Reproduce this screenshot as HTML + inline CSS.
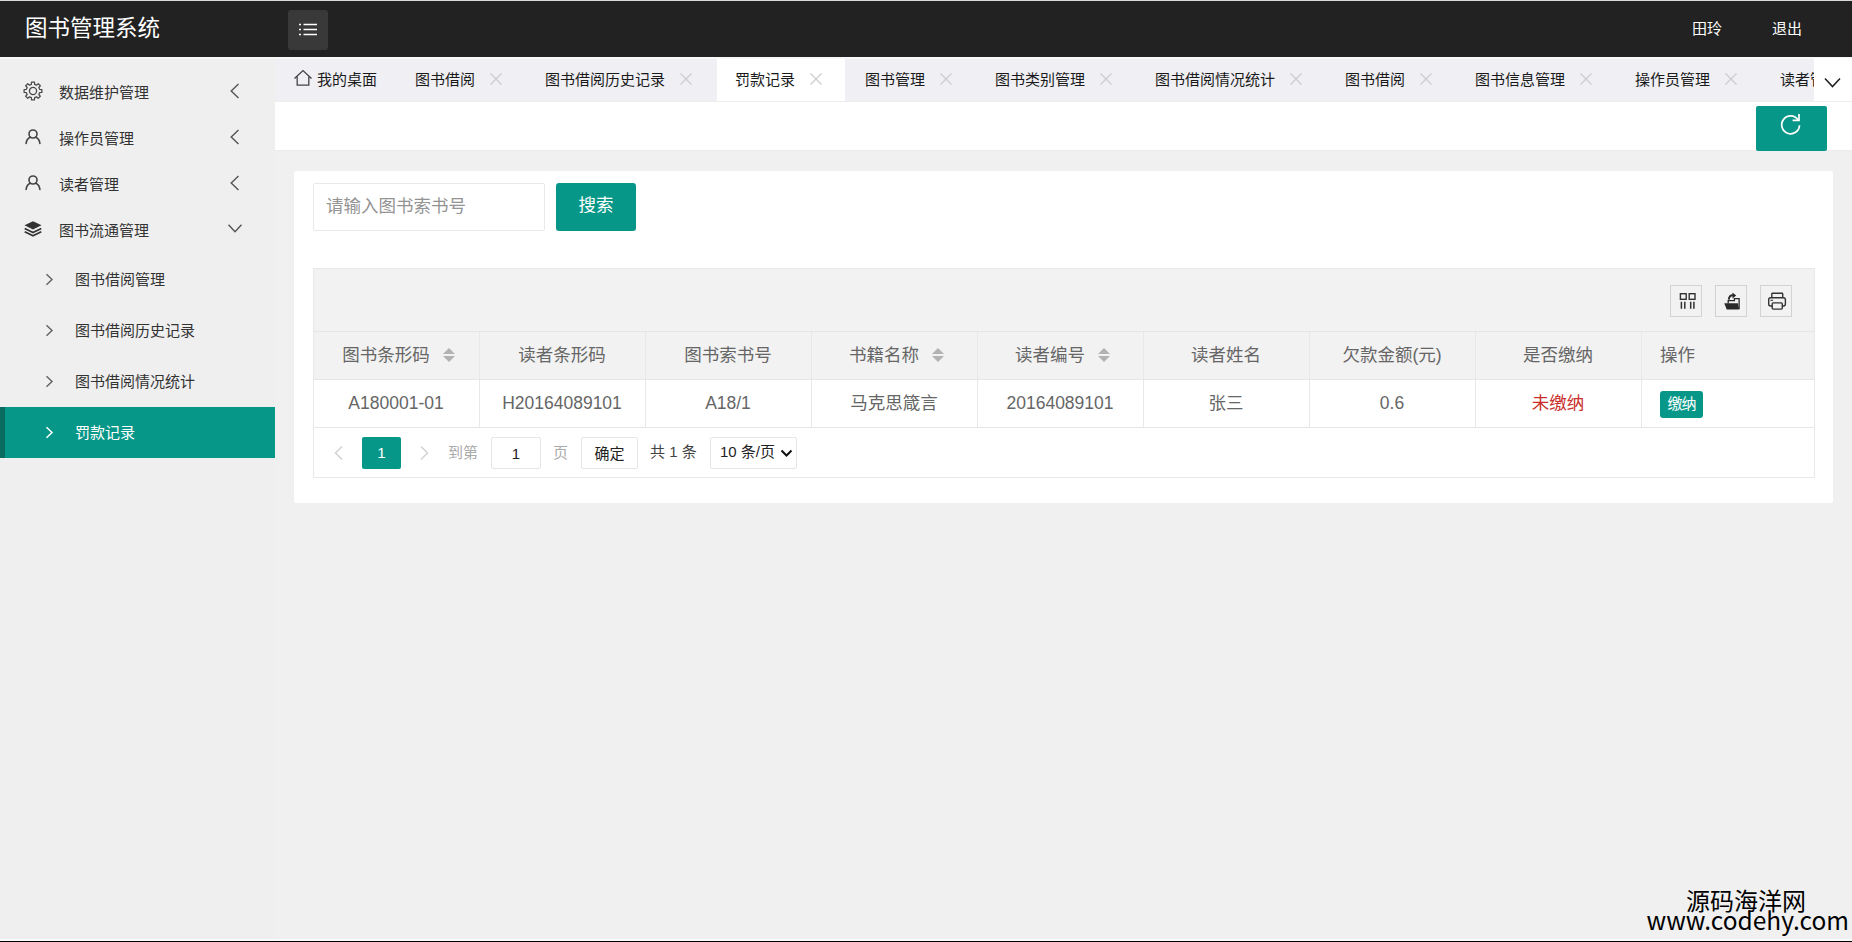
<!DOCTYPE html>
<html lang="zh-CN">
<head>
<meta charset="utf-8">
<title>图书管理系统</title>
<style>
*{box-sizing:border-box;margin:0;padding:0}
html,body{width:1852px;height:942px;overflow:hidden}
body{position:relative;background:#f0f0f0;font-family:"Liberation Sans","Noto Sans CJK SC",sans-serif;color:#333;font-size:15px}
.abs{position:absolute}
svg{display:block}
/* header */
#hdr{position:absolute;left:0;top:0;width:1852px;height:57px;background:#222222;border-top:1px solid #d8d8d8}
#logo{position:absolute;left:25px;top:0;height:56px;line-height:55px;font-size:22.5px;color:#fff;white-space:nowrap}
#ham{position:absolute;left:288px;top:9px;width:40px;height:40px;background:#393939;border-radius:3px}
.hu{position:absolute;top:0;height:56px;line-height:55px;color:#fff;font-size:15px;white-space:nowrap}
/* sidebar */
#side{position:absolute;left:0;top:57px;width:275px;height:885px;background:#efefef}
.mi{position:absolute;left:0;width:275px;height:46px;line-height:46px;font-size:15px;color:#333;white-space:nowrap}
.mi .t{position:absolute;left:59px;top:1px}
.mi svg{position:absolute}
.si{position:absolute;left:0;width:275px;height:51px;line-height:51px;font-size:15px;color:#333;white-space:nowrap}
.si .t{position:absolute;left:75px;top:0}
.si svg{position:absolute;left:45px;top:19px}
.si.on{background:#079788;color:#fff;border-left:5px solid #0a6b60}
.si.on .t{left:70px}
.si.on svg{left:40px}
/* tabs */
#tabs{position:absolute;left:275px;top:57px;width:1577px;height:44px;background:#efeff4;overflow:hidden}
.tab{position:absolute;top:0;height:44px;line-height:45px;font-size:15px;color:#1a1a1a;white-space:nowrap}
.tab .x{position:absolute;top:15px}
.tab.on{background:#fff;top:2px;height:42px;line-height:41px}
.tab.on .x{top:13px}
#more{position:absolute;left:1814px;top:58px;width:38px;height:43px;background:#fff}
#bar{position:absolute;left:275px;top:101px;width:1577px;height:50px;background:#fff;border-bottom:1px solid #ececec;border-top:1px solid #ededed}
#ref{position:absolute;left:1756px;top:106px;width:71px;height:45px;background:#079788;border-radius:2px}
/* card */
#card{position:absolute;left:294px;top:171px;width:1539px;height:332px;background:#fff;border-radius:2px}
#inp{position:absolute;left:313px;top:183px;width:232px;height:48px;border:1px solid #e9e9e9;border-radius:2px;background:#fff;color:#939393;font-size:17.5px;line-height:45px;padding-left:12px;white-space:nowrap}
#sbtn{position:absolute;left:556px;top:183px;width:80px;height:48px;background:#079788;border-radius:3px;color:#fff;font-size:17.5px;line-height:45px;text-align:center}
#tbl{position:absolute;left:313px;top:268px;width:1502px;height:210px;border:1px solid #e8e8e8;background:#fff}
#tool{position:absolute;left:0;top:0;width:1500px;height:63px;background:#f2f2f2;border-bottom:1px solid #e6e6e6}
.tb{position:absolute;top:16px;width:32px;height:32px;border:1px solid #d2d2d2}
#thead{position:absolute;left:0;top:63px;width:1500px;height:48px;background:#f2f2f2;border-bottom:1px solid #e6e6e6}
#trow{position:absolute;left:0;top:111px;width:1500px;height:48px;background:#fff;border-bottom:1px solid #e6e6e6}
.c{position:absolute;top:0;height:47px;line-height:46px;width:166px;text-align:center;font-size:17.5px;color:#666;border-right:1px solid #e8e8e8;white-space:nowrap}
.c.l{text-align:left;padding-left:18px;border-right:0;width:172px}
.sort{display:inline-block;position:relative;width:12px;height:16px;margin-left:13px;vertical-align:-2px}
.c.s{padding-left:5px}
.sort:before,.sort:after{content:"";position:absolute;left:0;border:6px solid transparent}
.sort:before{top:-5px;border-bottom-color:#b2b2b2}
.sort:after{top:9px;border-top-color:#b2b2b2}
#pay{position:absolute;left:1660px;top:391px;width:43px;height:27px;background:#079788;border-radius:3px;color:#fff;font-size:15px;line-height:26px;text-align:center;white-space:nowrap;letter-spacing:-1px}
/* pager */
.pg{position:absolute;top:437px;height:32px;line-height:31px;font-size:15px;white-space:nowrap}
.bx{border:1px solid #e6e6e6;border-radius:2px;background:#fff;text-align:center}
#wm{position:absolute;right:3px;top:889.5px;text-align:right;color:#000;font-size:24px;line-height:24px;white-space:nowrap}
#bot{position:absolute;left:0;top:939px;width:1852px;height:3px;background:#000;border-top:2px solid #fafafa}
</style>
</head>
<body>
<div id="hdr">
  <div id="logo">图书管理系统</div>
  <div id="ham"><svg width="40" height="40" viewBox="0 0 40 40"><g stroke="#fff" stroke-width="1.6" fill="none"><path d="M15.5 14.5H29M15.5 19.5H29M15.5 24.5H29"/><path d="M11 14.5h2M11 19.5h2M11 24.5h2"/></g></svg></div>
  <div class="hu" style="left:1692px">田玲</div>
  <div class="hu" style="left:1772px">退出</div>
</div>

<div id="side">
<div class="mi" style="top:12px"><svg style="left:23px;top:12px" width="20" height="20" viewBox="0 0 20 20"><g fill="none" stroke="#4a4a4a" stroke-width="1.250" stroke-linejoin="round"><circle cx="10" cy="10" r="3.600"/><path d="M8.36 3.40 L8.52 1.12 L11.48 1.12 L11.64 3.40 L13.51 4.17 L15.23 2.68 L17.32 4.77 L15.83 6.49 L16.60 8.36 L18.88 8.52 L18.88 11.48 L16.60 11.64 L15.83 13.51 L17.32 15.23 L15.23 17.32 L13.51 15.83 L11.64 16.60 L11.48 18.88 L8.52 18.88 L8.36 16.60 L6.49 15.83 L4.77 17.32 L2.68 15.23 L4.17 13.51 L3.40 11.64 L1.12 11.48 L1.12 8.52 L3.40 8.36 L4.17 6.49 L2.68 4.77 L4.77 2.68 L6.49 4.17Z"/></g></svg><span class="t">数据维护管理</span><svg style="left:228.500px;top:14px" width="12" height="16" viewBox="0 0 12 16"><path d="M9.500 1L2.200 8l7.300 7" fill="none" stroke="#555" stroke-width="1.400"/></svg></div>
<div class="mi" style="top:58px"><svg style="left:24px;top:13.4px" width="18" height="18" viewBox="0 0 18 18"><g fill="none" stroke="#444" stroke-width="1.600" stroke-linecap="round"><circle cx="9" cy="6" r="4"/><path d="M2.100 15.500c.3-3.200 2-5.400 4.300-6.300M15.900 15.500c-.3-3.200-2-5.400-4.300-6.300"/></g></svg><span class="t">操作员管理</span><svg style="left:228.500px;top:14px" width="12" height="16" viewBox="0 0 12 16"><path d="M9.500 1L2.200 8l7.300 7" fill="none" stroke="#555" stroke-width="1.400"/></svg></div>
<div class="mi" style="top:104px"><svg style="left:24px;top:13.4px" width="18" height="18" viewBox="0 0 18 18"><g fill="none" stroke="#444" stroke-width="1.600" stroke-linecap="round"><circle cx="9" cy="6" r="4"/><path d="M2.100 15.500c.3-3.200 2-5.400 4.300-6.300M15.900 15.500c-.3-3.200-2-5.400-4.300-6.300"/></g></svg><span class="t">读者管理</span><svg style="left:228.500px;top:14px" width="12" height="16" viewBox="0 0 12 16"><path d="M9.500 1L2.200 8l7.300 7" fill="none" stroke="#555" stroke-width="1.400"/></svg></div>
<div class="mi" style="top:150px"><svg style="left:23px;top:12px" width="20" height="20" viewBox="0 0 20 20"><path d="M10 2.200L1.500 6.300 10 10.400l8.500-4.100z" fill="#333"/><path d="M1.700 9.600L10 13.600l8.300-4M1.700 12.800L10 16.800l8.300-4" fill="none" stroke="#333" stroke-width="1.7" stroke-linejoin="round"/></svg><span class="t">图书流通管理</span><svg style="left:227px;top:16px" width="16" height="12" viewBox="0 0 16 12"><path d="M1.500 1.800l6.500 7 6.500-7" fill="none" stroke="#555" stroke-width="1.400"/></svg></div>
<div class="si" style="top:197px"><svg width="9" height="13" viewBox="0 0 9 13"><path d="M1.500 1.200L7 6.500l-5.500 5.300" fill="none" stroke="#666" stroke-width="1.500"/></svg><span class="t">图书借阅管理</span></div>
<div class="si" style="top:248px"><svg width="9" height="13" viewBox="0 0 9 13"><path d="M1.500 1.200L7 6.500l-5.500 5.300" fill="none" stroke="#666" stroke-width="1.500"/></svg><span class="t">图书借阅历史记录</span></div>
<div class="si" style="top:299px"><svg width="9" height="13" viewBox="0 0 9 13"><path d="M1.500 1.200L7 6.500l-5.500 5.300" fill="none" stroke="#666" stroke-width="1.500"/></svg><span class="t">图书借阅情况统计</span></div>
<div class="si on" style="top:350px"><svg width="9" height="13" viewBox="0 0 9 13"><path d="M1.500 1.200L7 6.500l-5.500 5.300" fill="none" stroke="#fff" stroke-width="1.500"/></svg><span class="t">罚款记录</span></div>
</div>
<div id="tabs">
<div class="tab" style="left:1px;width:121px"><svg style="position:absolute;left:17px;top:11px" width="20" height="20" viewBox="0 0 20 20"><path d="M1.500 10.500L10 2.600l8.500 7.900M4.200 8.800V17.200h11.600V8.800" fill="none" stroke="#444" stroke-width="1.300"/></svg><span style="position:absolute;left:41px">我的桌面</span></div>
<div class="tab" style="left:122px;width:128px"><span style="position:absolute;left:18px">图书借阅</span><svg class="x" style="left:92px" width="14" height="14" viewBox="0 0 14 14"><path d="M1.500 1.500l11 11M12.500 1.500l-11 11" stroke="#cdcdcd" stroke-width="1.300" fill="none"/></svg></div>
<div class="tab" style="left:252px;width:188px"><span style="position:absolute;left:18px">图书借阅历史记录</span><svg class="x" style="left:152px" width="14" height="14" viewBox="0 0 14 14"><path d="M1.500 1.500l11 11M12.500 1.500l-11 11" stroke="#cdcdcd" stroke-width="1.300" fill="none"/></svg></div>
<div class="tab on" style="left:442px;width:128px"><span style="position:absolute;left:18px">罚款记录</span><svg class="x" style="left:92px" width="14" height="14" viewBox="0 0 14 14"><path d="M1.500 1.500l11 11M12.500 1.500l-11 11" stroke="#cdcdcd" stroke-width="1.300" fill="none"/></svg></div>
<div class="tab" style="left:572px;width:128px"><span style="position:absolute;left:18px">图书管理</span><svg class="x" style="left:92px" width="14" height="14" viewBox="0 0 14 14"><path d="M1.500 1.500l11 11M12.500 1.500l-11 11" stroke="#cdcdcd" stroke-width="1.300" fill="none"/></svg></div>
<div class="tab" style="left:702px;width:158px"><span style="position:absolute;left:18px">图书类别管理</span><svg class="x" style="left:122px" width="14" height="14" viewBox="0 0 14 14"><path d="M1.500 1.500l11 11M12.500 1.500l-11 11" stroke="#cdcdcd" stroke-width="1.300" fill="none"/></svg></div>
<div class="tab" style="left:862px;width:188px"><span style="position:absolute;left:18px">图书借阅情况统计</span><svg class="x" style="left:152px" width="14" height="14" viewBox="0 0 14 14"><path d="M1.500 1.500l11 11M12.500 1.500l-11 11" stroke="#cdcdcd" stroke-width="1.300" fill="none"/></svg></div>
<div class="tab" style="left:1052px;width:128px"><span style="position:absolute;left:18px">图书借阅</span><svg class="x" style="left:92px" width="14" height="14" viewBox="0 0 14 14"><path d="M1.500 1.500l11 11M12.500 1.500l-11 11" stroke="#cdcdcd" stroke-width="1.300" fill="none"/></svg></div>
<div class="tab" style="left:1182px;width:158px"><span style="position:absolute;left:18px">图书信息管理</span><svg class="x" style="left:122px" width="14" height="14" viewBox="0 0 14 14"><path d="M1.500 1.500l11 11M12.500 1.500l-11 11" stroke="#cdcdcd" stroke-width="1.300" fill="none"/></svg></div>
<div class="tab" style="left:1342px;width:143px"><span style="position:absolute;left:18px">操作员管理</span><svg class="x" style="left:107px" width="14" height="14" viewBox="0 0 14 14"><path d="M1.500 1.500l11 11M12.500 1.500l-11 11" stroke="#cdcdcd" stroke-width="1.300" fill="none"/></svg></div>
<div class="tab" style="left:1487px;width:128px"><span style="position:absolute;left:18px">读者管理</span><svg class="x" style="left:92px" width="14" height="14" viewBox="0 0 14 14"><path d="M1.500 1.500l11 11M12.500 1.500l-11 11" stroke="#cdcdcd" stroke-width="1.300" fill="none"/></svg></div>
</div>
<div class="abs" style="left:0;top:57px;width:1852px;height:2px;background:#f7f7f8"></div>
<div id="more"><svg width="39" height="44" viewBox="1 1 39 44"><path d="M12 21.5l7.5 8 7.5-8" stroke="#222" stroke-width="1.6" fill="none"/></svg></div>
<div id="bar"></div>
<div id="ref"><svg width="71" height="45" viewBox="1 1.500 71 45"><path d="M43 15.400a8.900 8.900 0 1 0 1.500 5.300" fill="none" stroke="#fff" stroke-width="1.700"/><path d="M44 9.500v6.400h-6.400" fill="none" stroke="#fff" stroke-width="1.700"/></svg></div>
<div id="card"></div>
<div id="inp">请输入图书索书号</div>
<div id="sbtn">搜索</div>
<div id="tbl">
  <div id="tool">
<div class="tb" style="left:1356px"><svg width="30" height="30" viewBox="0 0 30 30"><g fill="none" stroke="#333" stroke-width="1.400"><rect x="9.400" y="7.700" width="5.800" height="5.600"/><rect x="18.200" y="7.700" width="5.800" height="5.600"/><path d="M10.400 15.700v7M13.800 15.700v7M19.700 15.700v7M22.900 15.700v7" stroke-width="1.500"/></g></svg></div>
<div class="tb" style="left:1401px"><svg width="30" height="30" viewBox="0 0 30 30"><path d="M8.300 17.200H21.800L23.300 23.400H10.700z" fill="#2a2a2a"/><path d="M12.200 17.500V14.600H18.400V12.600H23.100V23" fill="none" stroke="#2a2a2a" stroke-width="1.300"/><path d="M12.800 13.600C13 10.800 14.600 9.300 17 9.300" fill="none" stroke="#2a2a2a" stroke-width="1.900"/><path d="M16.500 6.400L20.200 9.500L16.500 12.500z" fill="#2a2a2a"/></svg></div>
<div class="tb" style="left:1446px"><svg width="30" height="30" viewBox="0 0 30 30"><g fill="none" stroke="#333" stroke-width="1.400"><path d="M10.800 11.800V7.900a.7.700 0 0 1 .7-.7h9.500a.7.700 0 0 1 .7.700v3.900"/><rect x="7.700" y="11.800" width="16.700" height="8.200" rx="2"/><rect x="11.200" y="16.900" width="10.100" height="6.200" rx="1" fill="#f2f2f2"/><path d="M9.500 14.300h2.500" stroke-width="1.100"/></g></svg></div>
</div>
  <div id="thead">
<div class="c s" style="left:-1px;width:167px">图书条形码<i class="sort"></i></div>
<div class="c" style="left:165px;width:167px">读者条形码</div>
<div class="c" style="left:331px;width:167px">图书索书号</div>
<div class="c s" style="left:497px;width:167px">书籍名称<i class="sort"></i></div>
<div class="c s" style="left:663px;width:167px">读者编号<i class="sort"></i></div>
<div class="c" style="left:829px;width:167px">读者姓名</div>
<div class="c" style="left:995px;width:167px">欠款金额(元)</div>
<div class="c" style="left:1161px;width:167px">是否缴纳</div>
<div class="c l" style="left:1328px">操作</div>
</div>
  <div id="trow">
<div class="c" style="left:-1px;width:167px">A180001-01</div>
<div class="c" style="left:165px;width:167px">H20164089101</div>
<div class="c" style="left:331px;width:167px">A18/1</div>
<div class="c" style="left:497px;width:167px">马克思箴言</div>
<div class="c" style="left:663px;width:167px">20164089101</div>
<div class="c" style="left:829px;width:167px">张三</div>
<div class="c" style="left:995px;width:167px">0.6</div>
<div class="c" style="left:1161px;width:167px"><span style="color:#c9302c">未缴纳</span></div>
</div>
</div>
<div id="pay">缴纳</div>
<svg class="abs" style="left:333px;top:445px" width="11" height="16" viewBox="0 0 11 16"><path d="M9 1.500L2.500 8 9 14.500" fill="none" stroke="#d2d2d2" stroke-width="1.500"/></svg>
<div class="pg" style="left:362px;width:39px;background:#079788;color:#fff;text-align:center;border-radius:2px">1</div>
<svg class="abs" style="left:419px;top:445px" width="11" height="16" viewBox="0 0 11 16"><path d="M2 1.500L8.500 8 2 14.500" fill="none" stroke="#d2d2d2" stroke-width="1.500"/></svg>
<div class="pg" style="left:448px;color:#aaa">到第</div>
<div class="pg bx" style="left:491px;width:50px;color:#222">1</div>
<div class="pg" style="left:553px;color:#aaa">页</div>
<div class="pg bx" style="left:581px;width:57px;color:#222">确定</div>
<div class="pg" style="left:650px;color:#444;line-height:29px">共 1 条</div>
<div class="pg bx" style="left:710px;width:87px;color:#222;text-align:left;padding-left:9px;line-height:28px">10 条/页<svg class="abs" style="left:69px;top:11px" width="13" height="9" viewBox="0 0 13 9"><path d="M1.500 1.500l5 5 5-5" fill="none" stroke="#111" stroke-width="2"/></svg></div>
<div id="wm"><div style="padding-right:43px">源码海洋网</div><div style="font-family:'Noto Sans CJK SC','Liberation Sans',sans-serif;font-size:24.5px;margin-top:-5.5px">www.codehy.com</div></div>
<div id="bot"></div>
</body>
</html>
